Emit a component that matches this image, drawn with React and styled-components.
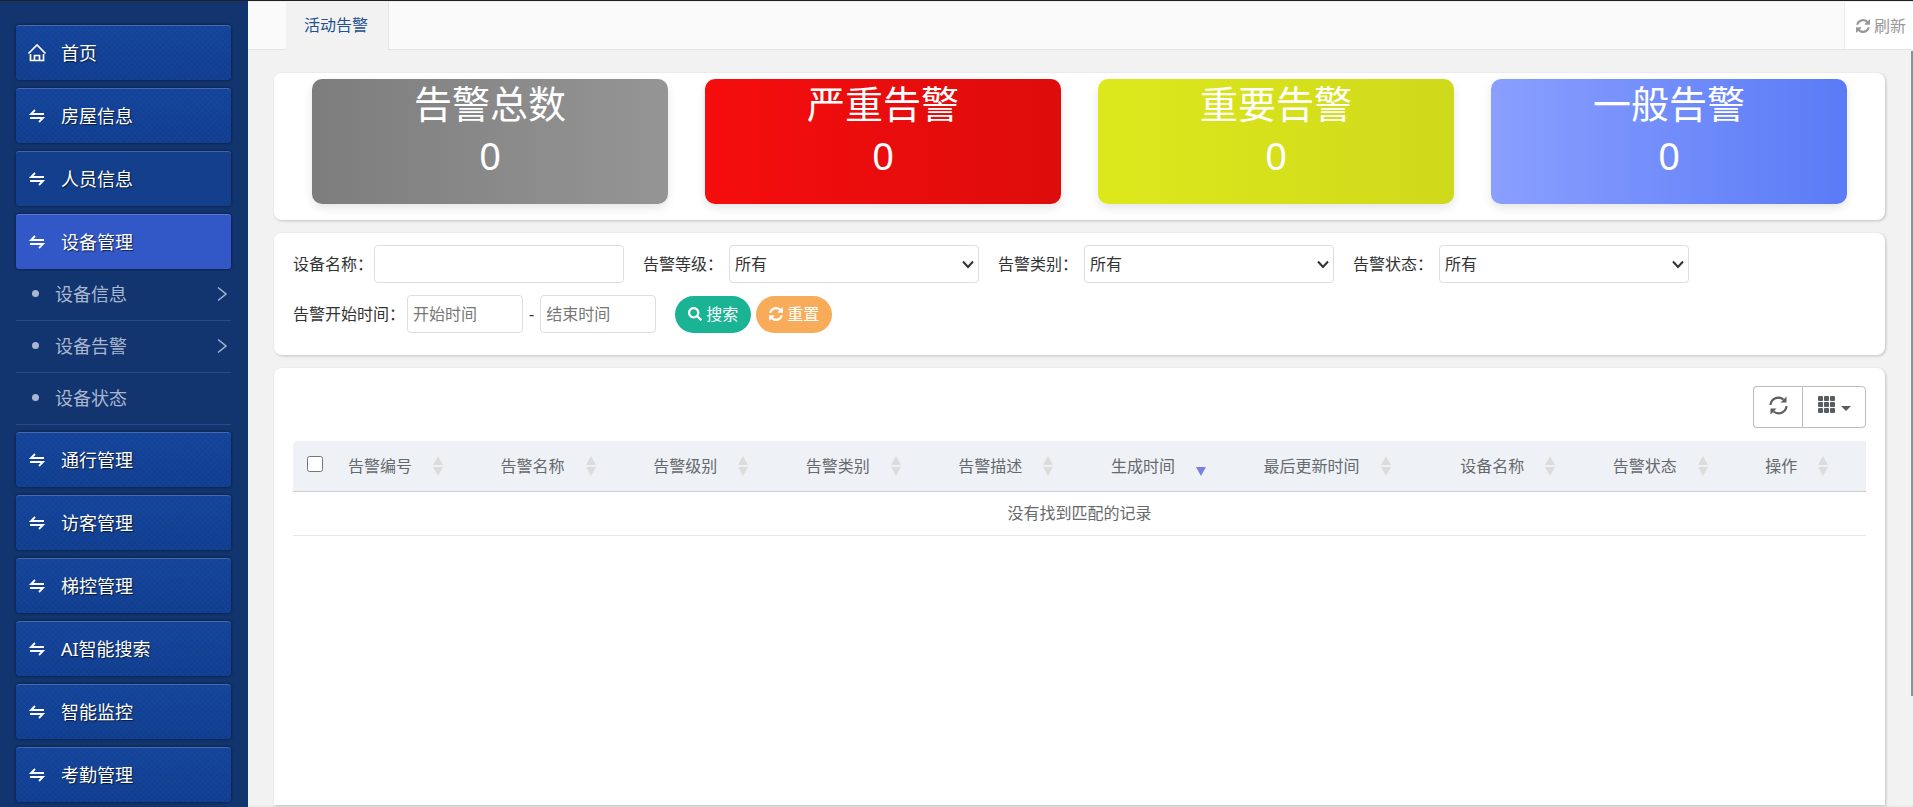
import { useState } from 'react';
import styled, { createGlobalStyle } from 'styled-components';
import { FaSearch } from 'react-icons/fa';

const colors = {
    sidebar: '#12356f',
    item: '#13449b',
    itemFlat: '#133f8d',
    active: '#3257c6',
    page: '#f2f2f2',
    text: '#333333',
    muted: '#676a6c',
    search: '#1ab394',
    reset: '#f8ac59',
};

const GlobalStyle = createGlobalStyle`
    * {
        box-sizing: border-box;
    }
    body {
        margin: 0;
        overflow: hidden;
        background: ${colors.page};
        color: ${colors.text};
        font-family: 'Noto Sans', 'Noto Sans CJK SC', sans-serif;
        font-size: 16px;
        line-height: 24px;
    }
    button, input, select {
        font: inherit;
        color: inherit;
    }
`;

const Layout = styled.div`
    display: flex;
    height: 100vh;
    border-top: 1px solid #231f20;
`;

const Sidebar = styled.nav`
    flex: 0 0 248px;
    padding: 24px 17px 0 16px;
    background: ${colors.sidebar};
    overflow: hidden;
`;

const MenuItem = styled.a`
    display: flex;
    align-items: center;
    gap: 14px;
    height: 55px;
    margin-bottom: ${(props) => (props.$open ? '0' : '8px')};
    padding: 0 11px;
    border-radius: 3px;
    color: white;
    font-size: 18px;
    text-decoration: none;
    text-shadow: 1px 1px 1px rgba(0, 0, 0, 0.6);
    background-color: ${colors.item};
    background-image: repeating-linear-gradient(45deg, rgba(0, 0, 0, 0.03) 0 2px, transparent 2px 4px),
        repeating-linear-gradient(-45deg, rgba(0, 0, 0, 0.03) 0 2px, transparent 2px 4px),
        linear-gradient(rgba(40, 90, 190, 0.15), rgba(0, 0, 0, 0.04));
    box-shadow: inset 0 1px 0 rgba(255, 255, 255, 0.2), 0 0 3px rgba(0, 0, 0, 0.6);
    ${(props) => props.$flat && `background: ${colors.itemFlat};`}
    ${(props) => props.$open && `background: ${colors.active};`}
    svg {
        flex: 0 0 20px;
    }
`;

const SubMenu = styled.ul`
    margin: 0 0 7px;
    padding: 0;
    list-style: none;
`;

const SubLink = styled.a`
    display: flex;
    align-items: center;
    height: 52px;
    padding: 0 3px 2px 16px;
    border-bottom: 1px solid #2b4a80;
    color: #a9b6cf;
    font-size: 18px;
    text-decoration: none;
    &::before {
        content: '';
        width: 7px;
        height: 7px;
        margin-right: 16px;
        border-radius: 50%;
        background: #a9b6cf;
    }
    svg {
        margin-left: auto;
    }
`;

const Main = styled.main`
    flex: 1;
    min-width: 0;
    display: flex;
    flex-direction: column;
    position: relative;
`;

const TopBar = styled.header`
    display: flex;
    height: 49px;
    padding-left: 38px;
    background: #fafafa;
    box-shadow: inset 0 -1px 0 #e4e4e4, inset 0 1px 0 #eeeeee;
`;

const Tab = styled.a`
    padding: 12px 20px 0 18px;
    border-right: 1px solid #e4e4e4;
    background: ${colors.page};
    color: #23508e;
    text-decoration: none;
`;

const RefreshButton = styled.button`
    display: flex;
    align-items: center;
    gap: 4px;
    margin: 1px 0 1px auto;
    padding: 0 7px 0 11px;
    border: 0;
    border-left: 1px solid #eeeeee;
    background: white;
    color: #999999;
`;

const Content = styled.div`
    flex: 1;
    min-height: 0;
    display: flex;
    flex-direction: column;
    gap: 13px;
    padding: 23px 28px 0 26px;
    border-bottom: 2px solid #ebebeb;
`;

const Panel = styled.section`
    border-radius: 8px;
    background: white;
    box-shadow: 1px 1px 3px rgba(0, 0, 0, 0.2);
`;

const StatsPanel = styled(Panel)`
    display: grid;
    grid-template-columns: repeat(4, 1fr);
    gap: 37px;
    padding: 6px 38px 16px;
`;

const StatCard = styled.div`
    height: 125px;
    border-radius: 10px;
    background: linear-gradient(to right, ${(props) => props.$from}, ${(props) => props.$to});
    box-shadow: 0 4px 10px rgba(0, 0, 0, 0.1);
    color: white;
    font-size: 38px;
    text-align: center;
`;

const StatTitle = styled.div`
    line-height: 48px;
`;

const StatCount = styled.div`
    line-height: 56px;
`;

const FilterForm = styled(Panel).attrs({ as: 'form' })`
    display: flex;
    flex-direction: column;
    gap: 12px;
    padding: 12px 19px 22px;
`;

const FilterRow = styled.div`
    display: flex;
    align-items: center;
    gap: 19px;
`;

const Field = styled.div`
    display: flex;
    align-items: center;
    gap: ${(props) => props.$gap}px;
`;

const Input = styled.input`
    width: ${(props) => (props.$short ? '116px' : '250px')};
    height: 38px;
    padding: 0 5px;
    border: 1px solid #dddddd;
    border-radius: 4px;
    background: white;
    &::placeholder {
        color: #777777;
        opacity: 1;
    }
`;

const SelectBox = styled.div`
    position: relative;
    svg {
        position: absolute;
        top: 15px;
        right: 5px;
        pointer-events: none;
    }
`;

const Select = styled.select`
    display: block;
    width: 250px;
    height: 38px;
    padding: 0 20px 0 5px;
    border: 1px solid #dddddd;
    border-radius: 4px;
    background: white;
    appearance: none;
`;

const Buttons = styled.div`
    display: flex;
    gap: 5px;
`;

const PillButton = styled.button`
    display: flex;
    align-items: center;
    gap: 4px;
    height: 37px;
    padding: 0 13px;
    border: 0;
    border-radius: 19px;
    background: ${(props) => props.$color};
    color: white;
`;

const TablePanel = styled(Panel)`
    flex: 1;
    padding: 18px 19px;
    border-radius: 8px 8px 0 0;
`;

const Toolbar = styled.div`
    display: flex;
    justify-content: flex-end;
    margin-bottom: 13px;
`;

const ToolButton = styled.button`
    display: flex;
    align-items: center;
    justify-content: center;
    gap: 5px;
    width: ${(props) => props.$width}px;
    height: 42px;
    padding: 0 0 4px;
    border: 1px solid #bbbbbb;
    background: white;
    color: #5a5d5f;
    &:first-child {
        border-right: 0;
        border-radius: 4px 0 0 4px;
    }
    &:last-child {
        border-radius: 0 4px 4px 0;
    }
`;

const Table = styled.table`
    width: 100%;
    table-layout: fixed;
    border-collapse: separate;
    border-spacing: 0;
    color: ${colors.muted};
`;

const Th = styled.th`
    width: ${(props) => props.$width};
    height: 51px;
    padding: 0 11px;
    border-bottom: 1px solid #c8cccf;
    background: #eef1f6;
    font-weight: 400;
    text-align: left;
    white-space: nowrap;
    &:first-child {
        padding: 0 0 0 14px;
        border-top-left-radius: 5px;
    }
`;

const ThInner = styled.div`
    display: flex;
    align-items: center;
    gap: 21px;
`;

const Checkbox = styled.input`
    display: block;
    width: 16px;
    height: 16px;
    margin: 0 0 5px;
`;

const EmptyCell = styled.td`
    height: 44px;
    padding: 0 0 2px;
    border-bottom: 1px solid #e7e7e7;
    text-align: center;
`;

const ScrollThumb = styled.div`
    position: absolute;
    top: 50px;
    right: 0;
    width: 2px;
    height: 80%;
    background: #8f8f8f;
`;

const HomeIcon = () => (
    <svg width="20" height="20" viewBox="0 0 20 20" fill="none" stroke="currentColor" strokeWidth="1.7">
        <path d="M1.5 10.500L10 2L18.500 10.500" />
        <path d="M3.500 11V17.500H16.500V11M7.500 17.500V12.500H12.500V17.500" />
    </svg>
);

const SwapIcon = () => (
    <svg width="20" height="20" viewBox="0 0 20 20" fill="none" stroke="currentColor" strokeWidth="1.8">
        <path d="M17 8H4L8 4M3 12H16L12 16" />
    </svg>
);

const ChevronIcon = () => (
    <svg width="12" height="16" viewBox="0 0 12 16" fill="none" stroke="currentColor" strokeWidth="1.5">
        <path d="M2 1.500L10 8L2 14.500" />
    </svg>
);

const ArrowDownIcon = () => (
    <svg width="12" height="9" viewBox="0 0 12 9" fill="none" stroke="#333333" strokeWidth="2">
        <path d="M1 1.500L6 7L11 1.500" />
    </svg>
);

const SyncIcon = () => (
    <svg width="14" height="14" viewBox="128 128 1536 1536" fill="currentColor">
        <path d="M1639 1056q0 5-1 7-64 268-268 434.500t-478 166.500q-146 0-282.500-55t-243.500-157l-129 129q-19 19-45 19t-45-19-19-45v-448q0-26 19-45t45-19h448q26 0 45 19t19 45-19 45l-137 137q71 66 161 102t187 36q134 0 250-65t186-179q11-17 53-117 8-23 30-23h192q13 0 22.500 9.500t9.500 22.500zm25-800v448q0 26-19 45t-45 19h-448q-26 0-45-19t-19-45 19-45l138-138q-148-137-349-137-134 0-250 65t-186 179q-11 17-53 117-8 23-30 23h-199q-13 0-22.500-9.500t-9.500-22.500v-7q65-268 270-434.500t480-166.500q146 0 284 55.500t245 156.500l130-129q19-19 45-19t45 19 19 45z" />
    </svg>
);

const ReloadIcon = () => (
    <svg width="19" height="19" viewBox="0 0 19 19" fill="none" stroke="currentColor" strokeWidth="2.2">
        <path d="M1.500 9A8 8 0 0 1 14.500 3.500M17.500 10A8 8 0 0 1 4.500 15.500" />
        <path d="M17.500 0.500V6.500H11.500ZM1.500 18.500V12.500H7.500Z" fill="currentColor" stroke="none" />
    </svg>
);

const GridIcon = () => (
    <svg width="18" height="18" viewBox="0 0 18 18" fill="currentColor">
        {[0, 6, 12].map((y) =>
            [0, 6, 12].map((x) => <rect key={`${x}-${y}`} x={x} y={y} width="5" height="5" rx="1" />)
        )}
    </svg>
);

const CaretIcon = () => (
    <svg width="10" height="11" viewBox="0 0 10 11" fill="currentColor">
        <path d="M0 6H10L5 11Z" />
    </svg>
);

const SortIcon = ({ desc }) => (
    <svg width="10" height="20" viewBox="0 0 10 20">
        {!desc && <path d="M0 9L5 0L10 9Z" fill="#dcdcdc" />}
        <path d="M0 11H10L5 20Z" fill={desc ? '#7b80e0' : '#dcdcdc'} />
    </svg>
);

const topMenu = [
    { label: '首页', icon: HomeIcon },
    { label: '房屋信息' },
    { label: '人员信息', flat: true },
    { label: '设备管理', open: true },
];

const subMenu = [
    { label: '设备信息', more: true },
    { label: '设备告警', more: true },
    { label: '设备状态' },
];

const bottomMenu = ['通行管理', '访客管理', '梯控管理', 'AI智能搜索', '智能监控', '考勤管理'];

const stats = [
    { title: '告警总数', from: '#7d7d7d', to: '#959595' },
    { title: '严重告警', from: '#f60d0d', to: '#de0c0c' },
    { title: '重要告警', from: '#dde81c', to: '#cfd91b' },
    { title: '一般告警', from: '#8a9fff', to: '#5a7bf6' },
];

const filters = [
    { id: 'level', label: '告警等级：' },
    { id: 'category', label: '告警类别：' },
    { id: 'status', label: '告警状态：' },
];

const columns = [
    { title: '告警编号', width: '9.7%' },
    { title: '告警名称', width: '9.7%' },
    { title: '告警级别', width: '9.7%' },
    { title: '告警类别', width: '9.7%' },
    { title: '告警描述', width: '9.7%' },
    { title: '生成时间', width: '9.7%', desc: true },
    { title: '最后更新时间', width: '12.5%' },
    { title: '设备名称', width: '9.7%' },
    { title: '告警状态', width: '9.7%' },
    { title: '操作' },
];

export default function App() {
    const [checked, setChecked] = useState(false);

    return (
        <Layout>
            <GlobalStyle />
            <Sidebar>
                {topMenu.map(({ label, icon: Icon = SwapIcon, flat, open }) => (
                    <MenuItem key={label} href="#" $flat={flat} $open={open}>
                        <Icon />
                        {label}
                    </MenuItem>
                ))}
                <SubMenu>
                    {subMenu.map(({ label, more }) => (
                        <li key={label}>
                            <SubLink href="#">
                                {label}
                                {more && <ChevronIcon />}
                            </SubLink>
                        </li>
                    ))}
                </SubMenu>
                {bottomMenu.map((label) => (
                    <MenuItem key={label} href="#">
                        <SwapIcon />
                        {label}
                    </MenuItem>
                ))}
            </Sidebar>
            <Main>
                <TopBar>
                    <Tab href="#">活动告警</Tab>
                    <RefreshButton type="button">
                        <SyncIcon />
                        刷新
                    </RefreshButton>
                </TopBar>
                <Content>
                    <StatsPanel>
                        {stats.map(({ title, from, to }) => (
                            <StatCard key={title} $from={from} $to={to}>
                                <StatTitle>{title}</StatTitle>
                                <StatCount>0</StatCount>
                            </StatCard>
                        ))}
                    </StatsPanel>
                    <FilterForm>
                        <FilterRow>
                            <Field $gap={1}>
                                <label htmlFor="name">设备名称：</label>
                                <Input id="name" type="text" />
                            </Field>
                            {filters.map(({ id, label }) => (
                                <Field key={id} $gap={6}>
                                    <label htmlFor={id}>{label}</label>
                                    <SelectBox>
                                        <Select id={id}>
                                            <option>所有</option>
                                        </Select>
                                        <ArrowDownIcon />
                                    </SelectBox>
                                </Field>
                            ))}
                        </FilterRow>
                        <FilterRow>
                            <Field $gap={2}>
                                <label htmlFor="start">告警开始时间：</label>
                                <Field $gap={6}>
                                    <Input id="start" type="text" placeholder="开始时间" $short />
                                    <span>-</span>
                                    <Input aria-label="结束时间" type="text" placeholder="结束时间" $short />
                                </Field>
                            </Field>
                            <Buttons>
                                <PillButton type="button" $color={colors.search}>
                                    <FaSearch size={14} />
                                    搜索
                                </PillButton>
                                <PillButton type="button" $color={colors.reset}>
                                    <SyncIcon />
                                    重置
                                </PillButton>
                            </Buttons>
                        </FilterRow>
                    </FilterForm>
                    <TablePanel>
                        <Toolbar>
                            <ToolButton type="button" aria-label="刷新" $width={49}>
                                <ReloadIcon />
                            </ToolButton>
                            <ToolButton type="button" aria-label="列" $width={64}>
                                <GridIcon />
                                <CaretIcon />
                            </ToolButton>
                        </Toolbar>
                        <Table>
                            <thead>
                                <tr>
                                    <Th $width="2.8%">
                                        <Checkbox
                                            type="checkbox"
                                            aria-label="全选"
                                            checked={checked}
                                            onChange={() => setChecked(!checked)}
                                        />
                                    </Th>
                                    {columns.map(({ title, width, desc }) => (
                                        <Th key={title} $width={width}>
                                            <ThInner>
                                                {title}
                                                <SortIcon desc={desc} />
                                            </ThInner>
                                        </Th>
                                    ))}
                                </tr>
                            </thead>
                            <tbody>
                                <tr>
                                    <EmptyCell colSpan={11}>没有找到匹配的记录</EmptyCell>
                                </tr>
                            </tbody>
                        </Table>
                    </TablePanel>
                </Content>
                <ScrollThumb />
            </Main>
        </Layout>
    );
}
